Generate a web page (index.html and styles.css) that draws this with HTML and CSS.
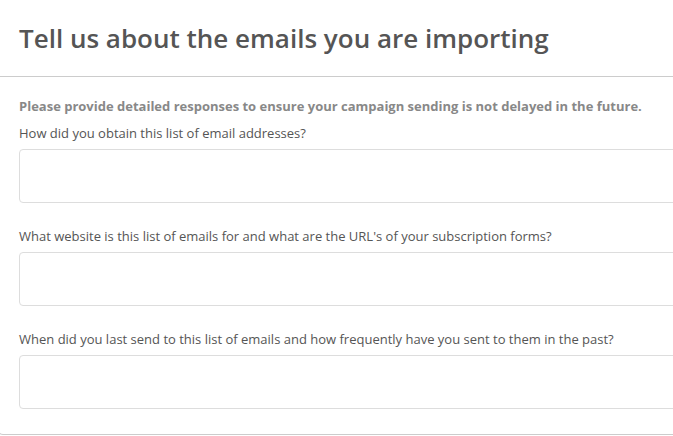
FILE: index.html
```html
<!DOCTYPE html>
<html lang="en">
<head>
    <meta charset="UTF-8">
    <title>Import emails</title>
    <link rel="stylesheet" href="styles.css">
</head>
<body>
    <div class="modal">
        <div class="modal-header">
            <h1>Tell us about the emails you are importing</h1>
        </div>
        <div class="modal-body">
            <p class="notice">Please provide detailed responses to ensure your campaign sending is not delayed in the future.</p>

            <div class="field">
                <label for="source">How did you obtain this list of email addresses?</label>
                <textarea id="source"></textarea>
            </div>

            <div class="field">
                <label for="website">What website is this list of emails for and what are the URL's of your subscription forms?</label>
                <textarea id="website"></textarea>
            </div>

            <div class="field">
                <label for="frequency">When did you last send to this list of emails and how frequently have you sent to them in the past?</label>
                <textarea id="frequency"></textarea>
            </div>
        </div>
    </div>
</body>
</html>
```

FILE: styles.css
```css
body {
    margin: 0;
    background: #fff;
    font-family: 'Open Sans', Arial, sans-serif;
    color: #555;
    overflow: hidden;
}

.modal {
    width: 740px;
    margin: -1px 0 0 -3px;
    border: 1px solid #ccc;
    border-top: none;
    border-radius: 0 0 6px 6px;
    background: #fff;
}

.modal-header {
    height: 77px;
    border-bottom: 1px solid #ccc;
    padding: 0 21px;
    display: flex;
    align-items: center;
}

.modal-header h1 {
    margin: 0;
    font-size: 26px;
    font-weight: 600;
    color: #555;
    padding-top: 1px;
}

.modal-body {
    padding: 20px 21px 1px;
}

.notice {
    margin: 0 0 9px;
    font-size: 13px;
    line-height: 18px;
    font-weight: 700;
    color: #888;
}

.field {
    margin-bottom: 24px;
}

.field label {
    display: block;
    font-size: 13px;
    line-height: 18px;
    color: #555;
    margin-bottom: 7px;
}

.field textarea {
    display: block;
    box-sizing: border-box;
    width: 100%;
    height: 54px;
    border: 1px solid #ddd;
    border-radius: 4px;
    resize: none;
    font-family: inherit;
    font-size: 13px;
    padding: 6px 10px;
}
```
